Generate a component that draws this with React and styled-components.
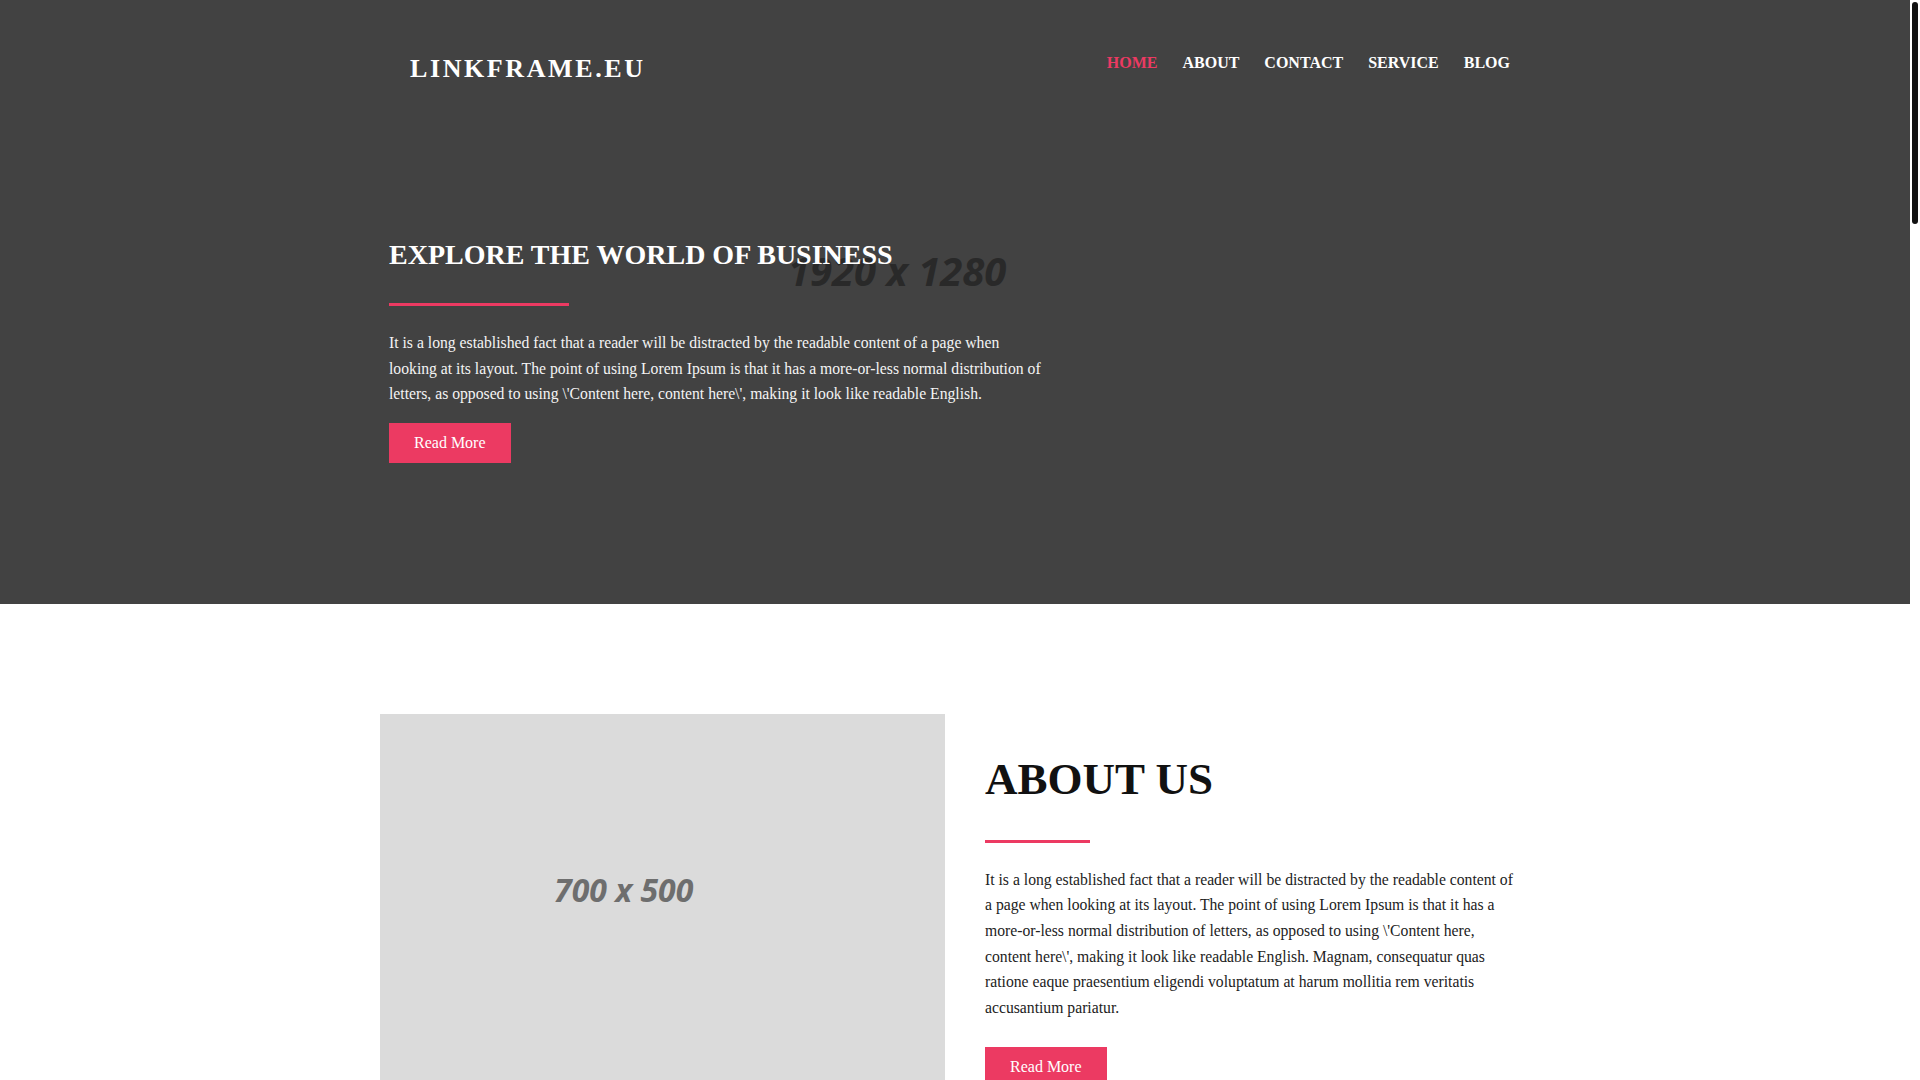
import styled, { createGlobalStyle } from 'styled-components';

const GlobalStyle = createGlobalStyle`
  * { box-sizing: border-box; }
  body {
    margin: 0;
    font-family: "Liberation Serif", "Times New Roman", serif;
    color: #222;
    background: #fff;
  }
`;

const ACCENT = '#ec3a62';

const Page = styled.div`
  margin-right: 10px;
  min-height: 5254px;
  display: flex;
  flex-direction: column;
`;

const ScrollTrack = styled.div`
  position: fixed;
  top: 0;
  right: 0;
  z-index: 10;
  width: 10px;
  height: 100vh;
  padding: 2px;
  background: #fff;
`;

const ScrollThumb = styled.div`
  width: 6px;
  height: 222px;
  border-radius: 3px;
  background: #111;
`;

const Container = styled.div`
  position: relative;
  width: 1140px;
  margin: 0 auto;
`;

// hero
const Hero = styled.section`
  position: relative;
  background: #424242;
  padding-bottom: 141px;
  overflow: hidden;
`;

const HeroBackdrop = styled.div`
  position: absolute;
  inset: 0;
`;

const PlaceholderText = styled.span`
  position: absolute;
  left: ${(p) => p.$left}px;
  top: ${(p) => p.$top}px;
  font-family: "Open Sans", "DejaVu Sans", sans-serif;
  font-style: italic;
  font-weight: 700;
  font-size: ${(p) => p.$size}px;
  line-height: 1;
  color: ${(p) => p.$color};
  white-space: nowrap;
`;

const Header = styled.header`
  display: flex;
  justify-content: space-between;
  align-items: flex-start;
  padding: 53px 15px 0 25px;
`;

const Logo = styled.a`
  margin-top: 1px;
  font-size: 26px;
  line-height: 30px;
  font-weight: 700;
  letter-spacing: 2.6px;
  color: #fff;
  text-decoration: none;
`;

const Nav = styled.nav`
  display: flex;
  gap: 25px;
`;

const NavLink = styled.a`
  font-size: 16px;
  line-height: 20px;
  font-weight: 700;
  color: ${(p) => (p.$active ? ACCENT : '#fff')};
  text-decoration: none;
`;

const HeroContent = styled.div`
  padding-left: 4px;
`;

const HeroTitle = styled.h1`
  margin: 154px 0 0;
  font-size: 28px;
  line-height: 34px;
  font-weight: 700;
  color: #fff;
`;

const Divider = styled.div`
  width: ${(p) => p.$width}px;
  height: 3px;
  margin-top: ${(p) => p.$gap}px;
  background: ${ACCENT};
`;

const Text = styled.p`
  margin: 24px 0 0;
  max-width: ${(p) => p.$max || 'none'};
  font-size: 15.7px;
  line-height: 25.6px;
  color: ${(p) => (p.$light ? '#f4f4f4' : '#222')};
`;

const Button = styled.a`
  display: inline-flex;
  align-items: center;
  height: 40px;
  margin-top: ${(p) => p.$gap}px;
  padding: 0 25px;
  background: ${ACCENT};
  color: #fff;
  font-size: 16px;
  text-decoration: none;
`;

// about
const About = styled.section`
  padding: 110px 0;
`;

const AboutRow = styled.div`
  display: grid;
  grid-template-columns: 565px 532px;
  column-gap: 40px;
  margin-left: -5px;
  align-items: start;
`;

const ImageBox = styled.div`
  position: relative;
  height: ${(p) => p.$height}px;
  background: #dbdbdb;
  overflow: hidden;
`;

const SectionTitle = styled.h2`
  margin: ${(p) => p.$top}px 0 0;
  font-size: 45px;
  line-height: 50px;
  font-weight: 700;
  color: #111;
`;

// lower sections
const Band = styled.section`
  padding: 110px 0;
  background: ${(p) => p.$bg || '#fff'};
`;

const CenterHead = styled.div`
  display: flex;
  flex-direction: column;
  align-items: center;
  text-align: center;
`;

const CardGrid = styled.div`
  display: grid;
  grid-template-columns: repeat(3, 1fr);
  gap: 30px;
  margin-top: 60px;
`;

const Card = styled.div`
  background: #fff;
  padding: 40px 30px;
  border: 1px solid #eee;
`;

const CardTitle = styled.h3`
  margin: ${(p) => (p.$top ? '20px' : '0')} 0 0;
  font-size: 22px;
  font-weight: 700;
  color: #111;
`;

const ContactForm = styled.form`
  display: grid;
  grid-template-columns: 1fr 1fr;
  gap: 20px;
  max-width: 760px;
  margin: 60px auto 0;
`;

const Field = styled.input`
  height: 48px;
  padding: 0 16px;
  border: 1px solid #ddd;
  font-family: inherit;
  font-size: 16px;
`;

const Area = styled.textarea`
  grid-column: 1 / -1;
  height: 160px;
  padding: 14px 16px;
  border: 1px solid #ddd;
  font-family: inherit;
  font-size: 16px;
  resize: none;
`;

const Footer = styled.footer`
  margin-top: auto;
  padding: 40px 0;
  background: #424242;
  color: #ddd;
  text-align: center;
  font-size: 15px;
`;

const navItems = ['HOME', 'ABOUT', 'CONTACT', 'SERVICE', 'BLOG'];

const lorem =
  "It is a long established fact that a reader will be distracted by the readable content of a page when looking at its layout. The point of using Lorem Ipsum is that it has a more-or-less normal distribution of letters, as opposed to using \\'Content here, content here\\', making it look like readable English.";

const services = ['WEB DESIGN', 'DEVELOPMENT', 'MARKETING'];
const posts = ['Business Strategy', 'Growing Your Brand', 'Working Together'];

export default function App() {
  return (
    <>
      <GlobalStyle />
      <ScrollTrack>
        <ScrollThumb />
      </ScrollTrack>
      <Page>
        <Hero>
          <HeroBackdrop>
            <PlaceholderText $left={788} $top={251} $size={40} $color="#292929">
              1920 x 1280
            </PlaceholderText>
          </HeroBackdrop>
          <Container>
            <Header>
              <Logo href="#">LINKFRAME.EU</Logo>
              <Nav>
                {navItems.map((item, i) => (
                  <NavLink key={item} href="#" $active={i === 0}>
                    {item}
                  </NavLink>
                ))}
              </Nav>
            </Header>
            <HeroContent>
              <HeroTitle>EXPLORE THE WORLD OF BUSINESS</HeroTitle>
              <Divider $width={180} $gap={31} />
              <Text $light $max="658px">{lorem}</Text>
              <Button href="#" $gap={16}>Read More</Button>
            </HeroContent>
          </Container>
        </Hero>

        <About>
          <Container>
            <AboutRow>
              <ImageBox $height={404}>
                <PlaceholderText $left={174} $top={160} $size={32} $color="#6e6e6e">
                  700 x 500
                </PlaceholderText>
              </ImageBox>
              <div>
                <SectionTitle $top={40}>ABOUT US</SectionTitle>
                <Divider $width={105} $gap={36} />
                <Text>
                  {lorem} Magnam, consequatur quas ratione eaque praesentium eligendi voluptatum at harum mollitia rem veritatis accusantium pariatur.
                </Text>
                <Button href="#" $gap={27}>Read More</Button>
              </div>
            </AboutRow>
          </Container>
        </About>

        <Band $bg="#f5f5f5">
          <Container>
            <CenterHead>
              <SectionTitle $top={0}>OUR SERVICE</SectionTitle>
              <Divider $width={105} $gap={30} />
            </CenterHead>
            <CardGrid>
              {services.map((s) => (
                <Card key={s}>
                  <CardTitle>{s}</CardTitle>
                  <Text>{lorem}</Text>
                </Card>
              ))}
            </CardGrid>
          </Container>
        </Band>

        <Band>
          <Container>
            <CenterHead>
              <SectionTitle $top={0}>OUR BLOG</SectionTitle>
              <Divider $width={105} $gap={30} />
            </CenterHead>
            <CardGrid>
              {posts.map((p) => (
                <div key={p}>
                  <ImageBox $height={250}>
                    <PlaceholderText $left={120} $top={108} $size={28} $color="#6e6e6e">
                      360 x 250
                    </PlaceholderText>
                  </ImageBox>
                  <CardTitle $top>{p}</CardTitle>
                  <Text>{lorem}</Text>
                  <Button href="#" $gap={20}>Read More</Button>
                </div>
              ))}
            </CardGrid>
          </Container>
        </Band>

        <Band $bg="#f5f5f5">
          <Container>
            <CenterHead>
              <SectionTitle $top={0}>CONTACT US</SectionTitle>
              <Divider $width={105} $gap={30} />
            </CenterHead>
            <ContactForm>
              <Field placeholder="Name" />
              <Field placeholder="Email" />
              <Area placeholder="Message" />
            </ContactForm>
          </Container>
        </Band>

        <Footer>© 2024 LINKFRAME.EU. All rights reserved.</Footer>
      </Page>
    </>
  );
}
